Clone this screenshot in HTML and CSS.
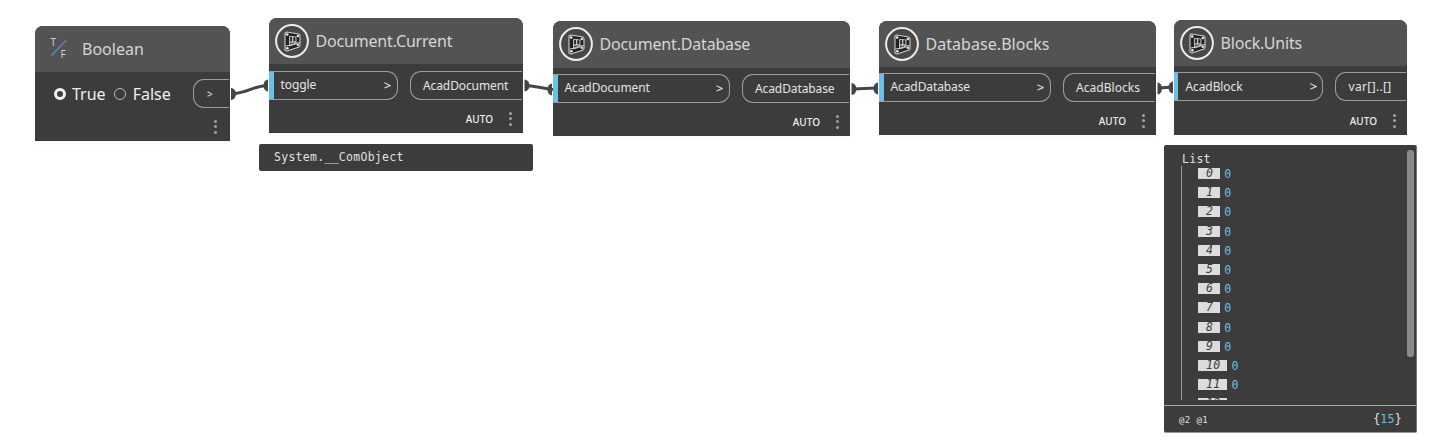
FILE: index.html
```html
<!DOCTYPE html>
<html lang="en">
<head>
<meta charset="utf-8">
<title>Node graph</title>
<link rel="stylesheet" href="styles.css">
</head>
<body>
<svg class="defs" width="0" height="0" aria-hidden="true">
  <symbol id="node-icon" viewBox="0 0 34 34">
    <circle cx="17" cy="17" r="15.900" fill="#484848" stroke="#ececec" stroke-width="2"/>
    <path d="M10 9 L11.500 8 L24 10 L25 11.500 V21.500 L24 23 L12 27 L10 26 Z" fill="#202020" stroke="#cfcfcf" stroke-width="1.100" stroke-linejoin="round"/>
    <path d="M14.500 12.300 L21 13 V20 L14.500 22 Z" fill="#484848" stroke="#c4c4c4" stroke-width=".9"/>
    <path d="M10.500 22 L14 21.500 L20.500 19.300 L25 18.500" fill="none" stroke="#d4d4d4" stroke-width="1"/>
    <path d="M17.700 12.500 V18 M14.500 18 H21" stroke="#e0e0e0" stroke-width="1"/>
    <path d="M16.100 13.500 V17 M19.400 13.500 V17" stroke="#222" stroke-width="1.200"/>
    <g fill="#f4f4f4"><circle cx="12.200" cy="10.500" r="1.300"/><circle cx="22.800" cy="12" r="1.200"/><circle cx="22.800" cy="20.800" r="1.200"/><circle cx="12.400" cy="24.300" r="1.300"/></g>
  </symbol>
</svg>
<main class="canvas">
  <svg class="wires" width="1442" height="446" viewBox="0 0 1442 446">
    <g class="wire">
      <path d="M233 93.5 C248 93 252 86 268 85.5"/>
      <path d="M526 85.5 C537 86 542 88.5 553 89.5"/>
      <path d="M853 89 L877 88"/>
      <path d="M1159 88 L1172 87"/>
    </g>
    <g class="knobs">
      <path d="M231 88 a5 6 0 0 1 0 12z"/>
      <path d="M268 79.500 a4.500 6 0 0 0 0 12z"/>
      <path d="M524.500 79.500 a5 6 0 0 1 0 12z"/>
      <path d="M552 83.500 a4.500 6 0 0 0 0 12z"/>
      <path d="M851.500 83 a5 6 0 0 1 0 12z"/>
      <path d="M878 82.500 a4.500 6 0 0 0 0 12z"/>
      <path d="M1157.500 82.500 a4.500 6 0 0 1 0 12z"/>
      <path d="M1173 81.500 a4.500 6 0 0 0 0 12z"/>
    </g>
  </svg>

  <section class="node node-boolean">
    <header class="head">
      <svg class="bool-icon" width="18" height="24" viewBox="0 0 18 24">
        <path d="M1.500 18.500 L16 3.500" stroke="#5b87b5" stroke-width="1.500"/>
        <text x="0.500" y="9">T</text><text x="10.500" y="21">F</text>
      </svg>
      <h2 class="title">Boolean</h2>
    </header>
    <div class="ports">
      <div class="choices">
        <span class="radio on"></span><span class="choice true">True</span>
        <span class="radio"></span><span class="choice">False</span>
      </div>
      <div class="port out">&gt;</div>
    </div>
    <footer class="foot"><span class="dots"><i></i><i></i><i></i></span></footer>
  </section>

  <section class="node node-current">
    <header class="head"><svg class="icon"><use href="#node-icon"/></svg><h2 class="title">Document.Current</h2></header>
    <div class="ports">
      <div class="port in"><span>toggle</span><b>&gt;</b></div>
      <div class="port out">AcadDocument</div>
    </div>
    <footer class="foot"><span class="auto">AUTO</span><span class="dots"><i></i><i></i><i></i></span></footer>
  </section>

  <section class="node node-database">
    <header class="head"><svg class="icon"><use href="#node-icon"/></svg><h2 class="title">Document.Database</h2></header>
    <div class="ports">
      <div class="port in"><span>AcadDocument</span><b>&gt;</b></div>
      <div class="port out">AcadDatabase</div>
    </div>
    <footer class="foot"><span class="auto">AUTO</span><span class="dots"><i></i><i></i><i></i></span></footer>
  </section>

  <section class="node node-blocks">
    <header class="head"><svg class="icon"><use href="#node-icon"/></svg><h2 class="title">Database.Blocks</h2></header>
    <div class="ports">
      <div class="port in"><span>AcadDatabase</span><b>&gt;</b></div>
      <div class="port out">AcadBlocks</div>
    </div>
    <footer class="foot"><span class="auto">AUTO</span><span class="dots"><i></i><i></i><i></i></span></footer>
  </section>

  <section class="node node-units">
    <header class="head"><svg class="icon"><use href="#node-icon"/></svg><h2 class="title">Block.Units</h2></header>
    <div class="ports">
      <div class="port in"><span>AcadBlock</span><b>&gt;</b></div>
      <div class="port out">var[]..[]</div>
    </div>
    <footer class="foot"><span class="auto">AUTO</span><span class="dots"><i></i><i></i><i></i></span></footer>
  </section>

  <div class="bubble">System.__ComObject</div>

  <section class="preview">
    <div class="viewport">
      <div class="tree">
        <div class="root">List</div>
        <ol class="items">
          <li><em>0</em><span>0</span></li>
          <li><em>1</em><span>0</span></li>
          <li><em>2</em><span>0</span></li>
          <li><em>3</em><span>0</span></li>
          <li><em>4</em><span>0</span></li>
          <li><em>5</em><span>0</span></li>
          <li><em>6</em><span>0</span></li>
          <li><em>7</em><span>0</span></li>
          <li><em>8</em><span>0</span></li>
          <li><em>9</em><span>0</span></li>
          <li><em>10</em><span>0</span></li>
          <li><em>11</em><span>0</span></li>
          <li><em>12</em></li>
        </ol>
      </div>
      <div class="scrollbar"></div>
    </div>
    <footer class="summary"><span class="levels">@2 @1</span><span class="count">{<b>15</b>}</span></footer>
  </section>
</main>
</body>
</html>
```
FILE: styles.css
```css
* { box-sizing: border-box; }
body { margin: 0; background: #fff; font-family: "Noto Sans", sans-serif; }
.defs { position: absolute; }
.canvas { position: relative; width: 1442px; height: 446px; overflow: hidden; }
.wires { position: absolute; inset: 0; }
.wire { fill: none; stroke: #464444; stroke-width: 3; }
.knobs { fill: #464444; }

.node {
  position: absolute;
  display: flex;
  flex-direction: column;
  height: 115px;
  background: #3c3c3c;
  border-radius: 8px 8px 0 0;
  overflow: hidden;
  box-shadow: 0 3px 5px rgba(0, 0, 0, .025);
}
.node-boolean { left: 35px; top: 26px; width: 195px; }
.node-current { left: 269px; top: 18px; width: 254px; }
.node-database { left: 553px; top: 21px; width: 297px; }
.node-blocks { left: 879px; top: 21px; width: 277px; height: 114px; }
.node-units { left: 1174px; top: 20px; width: 233px; }

.head { display: flex; align-items: center; flex: none; height: 46px; padding-left: 6px; background: #535353; }
.icon { width: 34px; height: 34px; flex: none; }
.title { margin: 0 0 0 6.500px; font-size: 16px; font-weight: 400; line-height: 22px; letter-spacing: -.18px; color: #d6d6d6; }
.bool-icon { margin-left: 9px; flex: none; }
.bool-icon text { font: 10px "Noto Sans", sans-serif; fill: #d0d0d0; }
.node-boolean .title { margin-left: 14px; letter-spacing: 0; }
.node-database .head { border-bottom: 1px solid #535353; height: 47px; }
.node-blocks .title { letter-spacing: .05px; }

.ports { display: flex; flex: none; gap: 12px; height: 29px; margin-top: 7px; }
.node-database .ports, .node-blocks .ports { margin-top: 6px; }
.node-units .ports { margin-top: 6px; height: 30px; }
.port { display: flex; align-items: center; height: 29px; border: 1px solid #9c9c9c; font-size: 12px; letter-spacing: -.1px; color: #e4e4e4; white-space: nowrap; }
.in { position: relative; flex: 1; justify-content: space-between; padding: 0 6px 2px 11.500px; border-left: 0; border-radius: 0 11px 11px 0; }
.in::before { content: ""; position: absolute; left: 0; top: 0; bottom: 0; width: 5px; background: #6ac0e7; }
.node-units .in { padding-right: 5px; padding-bottom: 1px; }
.node-units .in::before { width: 4px; }
.in b { font-size: 13px; font-weight: 500; }
.out { flex: none; margin-right: 1px; padding-left: 12px; border-right: 0; border-radius: 11px 0 0 11px; }
.node-boolean .out { width: 36px; padding-left: 13px; font-size: 10px; }
.node-current .out { width: 112px; }
.node-database .out { width: 107px; }
.node-blocks .out { width: 92px; letter-spacing: .05px; }
.node-units .out { width: 71px; padding-left: 12.500px; letter-spacing: .35px; }

.choices { display: flex; flex: 1; align-items: center; padding: 1px 0 0 19px; }
.radio { width: 12px; height: 12px; border: 1px solid #b8b8b8; border-radius: 50%; }
.radio.on { border: 3.500px solid #f0f0f0; }
.choice { margin-left: 6px; font-size: 16px; line-height: 22px; color: #f0f0f0; }
.choice.true { margin-right: 8px; }
.choice:last-child { margin-left: 7px; }

.foot { display: flex; flex: 1; align-items: center; justify-content: flex-end; gap: 16px; padding: 4px 11px 0 0; }
.node-boolean .foot { padding-right: 13px; }
.auto { font-size: 10px; font-weight: 500; color: #eee; }
.dots { display: flex; flex-direction: column; gap: 2.500px; width: 3px; }
.dots i { width: 3px; height: 3px; border-radius: 50%; background: #a0a0a0; }

.bubble {
  position: absolute; left: 259px; top: 144px; width: 274px; height: 27px;
  padding-left: 15px; border-radius: 2px; background: #3c3c3c; color: #e0e0e0;
  font: 11.500px/27px "DejaVu Sans Mono", monospace; letter-spacing: .28px;
}
.preview {
  position: absolute; left: 1164px; top: 145px; width: 253px; height: 288px;
  display: flex; flex-direction: column;
  border-right: 1px solid #777; border-bottom: 1px solid #999; border-radius: 2px;
  background: #3c3c3c; color: #e0e0e0; font: 11.500px "DejaVu Sans Mono", monospace; letter-spacing: .28px;
}
.viewport { display: flex; justify-content: space-between; height: 260px; padding: 5px 2px 5px 17px; }
.tree { display: flex; flex-direction: column; }
.root { flex: none; height: 16px; padding-left: 1px; line-height: 19px; }
.items { flex: 1; min-height: 0; overflow: hidden; margin: 0; padding: 2px 0 0 16px; list-style: none; border-left: 1px solid #999; }
.items li { display: flex; align-items: flex-start; gap: 4px; height: 19.200px; }
.items em { height: 11px; padding: 0 7px 0 8px; background: #dcdcdc; color: #3c3c3c; line-height: 11px; }
.items span { color: #6ac0e7; line-height: 13px; }
.scrollbar { width: 7px; height: 207px; border-radius: 3px; background: #8a8a8a; }
.summary { display: flex; flex: 1; align-items: center; justify-content: space-between; padding: 0 14px 0 15px; border-top: 1px solid #aaa; }
.levels { padding-top: 2px; font-size: 9px; letter-spacing: .4px; }
.count b { font-weight: 400; color: #6ac0e7; }
```
